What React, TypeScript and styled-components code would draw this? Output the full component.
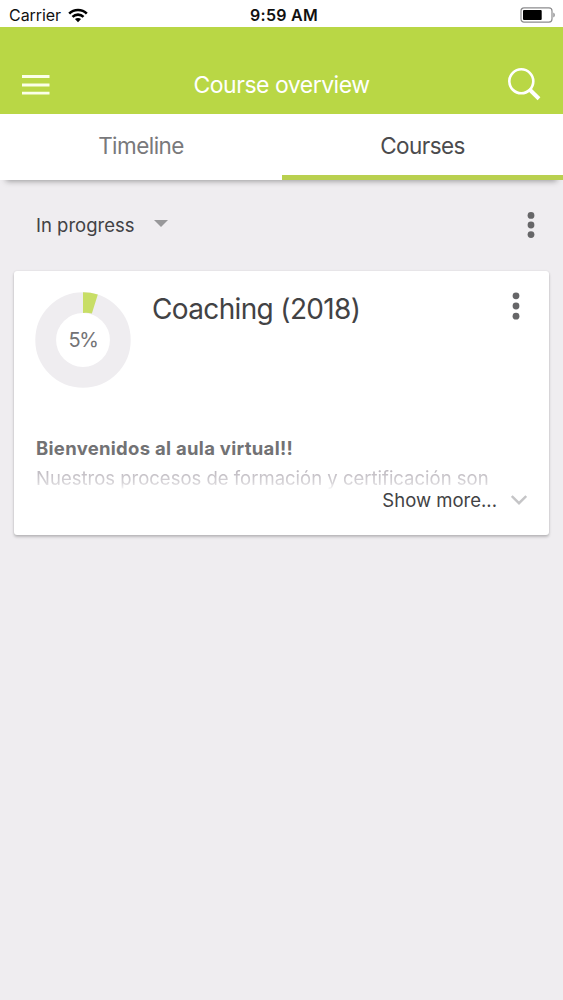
import React from "react";
import styled, { createGlobalStyle } from "styled-components";

const GlobalStyle = createGlobalStyle`
  * { box-sizing: border-box; }
  body { margin: 0; background: #efedf0; }
`;

const Screen = styled.main`
  display: flex;
  flex-direction: column;
  min-height: 1000px;
  background: #efedf0;
  color: #424244;
  font-family: Inter, "Liberation Sans", sans-serif;
`;

const Label = styled.span<{ $size: number; $spacing?: number; $weight?: number; $color?: string }>`
  font-size: ${(p) => p.$size}px;
  font-weight: ${(p) => p.$weight ?? 400};
  letter-spacing: ${(p) => p.$spacing ?? 0}px;
  color: ${(p) => p.$color ?? "inherit"};
  line-height: 30px;
  white-space: nowrap;
`;

const StatusBar = styled.div`
  display: grid;
  grid-template-columns: 1fr auto 1fr;
  align-items: center;
  height: 27px;
  padding: 0 7px 2px 9px;
  background: #fff;
  color: #111;
`;

const StatusGroup = styled.div<{ $end?: boolean }>`
  display: flex;
  align-items: center;
  justify-content: ${(p) => (p.$end ? "flex-end" : "flex-start")};
  gap: 7px;
  svg { display: block; }
`;

const Clock = styled.div`
  padding-left: 3px;
`;

const Header = styled.header`
  display: grid;
  grid-template-columns: 60px 1fr 60px;
  align-items: center;
  height: 87px;
  padding: 28px 0 0;
  background: #b9d745;
  color: #fff;
  text-align: center;
`;

const IconButton = styled.button<{ $left?: number }>`
  display: flex;
  padding: 0;
  margin-left: ${(p) => p.$left ?? 0}px;
  border: 0;
  background: none;
  color: inherit;
`;

const Tabs = styled.nav`
  display: grid;
  grid-template-columns: 282px 1fr;
  height: 66px;
  background: #fff;
  box-shadow: 0 7px 6px -6px rgba(0, 0, 0, 0.38);
`;

const Tab = styled.div<{ $active?: boolean }>`
  display: flex;
  justify-content: center;
  padding-top: 17px;
  color: ${(p) => (p.$active ? "#4b4b4d" : "#79797b")};
  border-bottom: 5px solid ${(p) => (p.$active ? "#b9d04f" : "transparent")};
`;

const FilterRow = styled.div`
  display: flex;
  align-items: center;
  justify-content: space-between;
  height: 91px;
  padding: 0 28px 2px 36px;
`;

const Select = styled.div`
  display: flex;
  align-items: center;
  gap: 19px;
  svg { display: block; margin-top: -2px; }
`;

const Card = styled.article`
  display: flex;
  flex-direction: column;
  height: 264px;
  margin: 0 14px;
  padding: 21px 22px 0;
  border-radius: 3px;
  background: #fff;
  box-shadow: 0 2px 3px rgba(0, 0, 0, 0.22), 0 0 2px rgba(0, 0, 0, 0.1);
`;

const CardTop = styled.div`
  display: grid;
  grid-template-columns: 116px 1fr auto;
  align-items: start;
  height: 142px;
  padding-right: 7px;
  margin-top: -1px;
`;

const Title = styled.div`
  padding-top: 3px;
`;

const Ring = styled.div`
  display: grid;
  width: 96px;
  height: 96px;
  margin: 1px 0 0 -1px;
  place-items: center;
  > * { grid-area: 1 / 1; }
`;

const Summary = styled.div`
  display: flex;
  flex-direction: column;
  height: 56px;
`;

const FadedLine = styled.div`
  height: 30px;
  line-height: 30px;
  -webkit-mask-image: linear-gradient(#000 10%, rgba(0, 0, 0, 0.55) 65%, transparent 92%);
  mask-image: linear-gradient(#000 10%, rgba(0, 0, 0, 0.55) 65%, transparent 92%);
`;

const ShowMore = styled.div`
  display: flex;
  justify-content: flex-end;
  align-items: center;
  height: 22px;
  gap: 14px;
`;

const MoreDots = ({ pitch }: { pitch: number }) => (
  <svg width="8" height="30" viewBox="0 0 8 30" fill="#666668">
    <circle cx="4" cy={15 - pitch} r="3.4" />
    <circle cx="4" cy="15" r="3.4" />
    <circle cx="4" cy={15 + pitch} r="3.4" />
  </svg>
);

const WifiIcon = () => (
  <svg width="20" height="15" viewBox="0 0 20 15" fill="none" stroke="#000" strokeWidth="2.6">
    <path d="M1.2 5.6C6 .7 14 .7 18.8 5.6" />
    <path d="M4.5 8.9c3-3 8-3 11 0" />
    <path d="M10 14.2 6.9 11.1c1.7-1.6 4.5-1.6 6.2 0Z" fill="#000" stroke="none" />
  </svg>
);

const BatteryIcon = () => (
  <svg width="36" height="16" viewBox="0 0 36 16">
    <rect x="1" y=".9" width="31" height="14.2" rx="3" fill="#fff" stroke="#8c8c8e" strokeWidth="1.2" />
    <rect x="3" y="3" width="18.7" height="10" rx="1" fill="#000" />
    <path d="M33.3 5.5c2 .8 2 4.2 0 5Z" fill="#8c8c8e" />
  </svg>
);

const ProgressRing = () => (
  <svg width="96" height="96" viewBox="0 0 96 96">
    <circle cx="48" cy="48" r="37.3" fill="none" stroke="#efedf0" strokeWidth="20.8" />
    <path d="M48 .2a47.8 47.8 0 0 1 14.8 2.3l-5.9 19a27 27 0 0 0-8.9-.5Z" fill="#c8de66" />
  </svg>
);

export default function App() {
  return (
    <Screen>
      <GlobalStyle />
      <StatusBar>
        <StatusGroup>
          <Label $size={16} $spacing={-0.05}>Carrier</Label>
          <WifiIcon />
        </StatusGroup>
        <Clock><Label $size={16} $weight={600} $spacing={0.25}>9:59 AM</Label></Clock>
        <StatusGroup $end>
          <BatteryIcon />
        </StatusGroup>
      </StatusBar>
      <Header>
        <IconButton $left={22} aria-label="Menu">
          <svg width="28" height="22" viewBox="0 0 28 22" stroke="#fbffe8" strokeWidth="2.8">
            <path d="M0 2.5h27.5M0 11h27.5M0 19.2h27.5" />
          </svg>
        </IconButton>
        <Label $size={23} $spacing={-0.5}>Course overview</Label>
        <IconButton $left={4} aria-label="Search">
          <svg width="34" height="34" viewBox="0 0 34 34" fill="none" stroke="#fff">
            <circle cx="14.3" cy="13.3" r="12" strokeWidth="2.6" />
            <path d="m22.3 21.3 9.7 9.4" strokeWidth="4" />
          </svg>
        </IconButton>
      </Header>
      <Tabs>
        <Tab><Label $size={22.5} $spacing={-0.55}>Timeline</Label></Tab>
        <Tab $active><Label $size={22.5} $spacing={-0.55}>Courses</Label></Tab>
      </Tabs>
      <FilterRow>
        <Select>
          <Label $size={18.5}>In progress</Label>
          <svg width="14" height="7" viewBox="0 0 14 7" fill="#98989a"><path d="M0 0h14L7 7Z" /></svg>
        </Select>
        <MoreDots pitch={9.6} />
      </FilterRow>
      <Card>
        <CardTop>
          <Ring>
            <ProgressRing />
            <Label $size={20} $spacing={-1.4} $color="#737375">5%</Label>
          </Ring>
          <Title><Label $size={28} $spacing={-0.65}>Coaching (2018)</Label></Title>
          <MoreDots pitch={10.2} />
        </CardTop>
        <Summary>
          <Label $size={18.5} $weight={700} $spacing={0.29} $color="#727274">Bienvenidos al aula virtual!!</Label>
          <FadedLine>
            <Label $size={18.5} $color="#b5b0b7">Nuestros procesos de formación y certificación son</Label>
          </FadedLine>
        </Summary>
        <ShowMore>
          <Label $size={18.5}>Show more...</Label>
          <svg width="16" height="10" viewBox="0 0 16 10" fill="none" stroke="#c5c5c7" strokeWidth="2.4"><path d="m.8 1 7.2 7.2L15.2 1" /></svg>
        </ShowMore>
      </Card>
    </Screen>
  );
}
